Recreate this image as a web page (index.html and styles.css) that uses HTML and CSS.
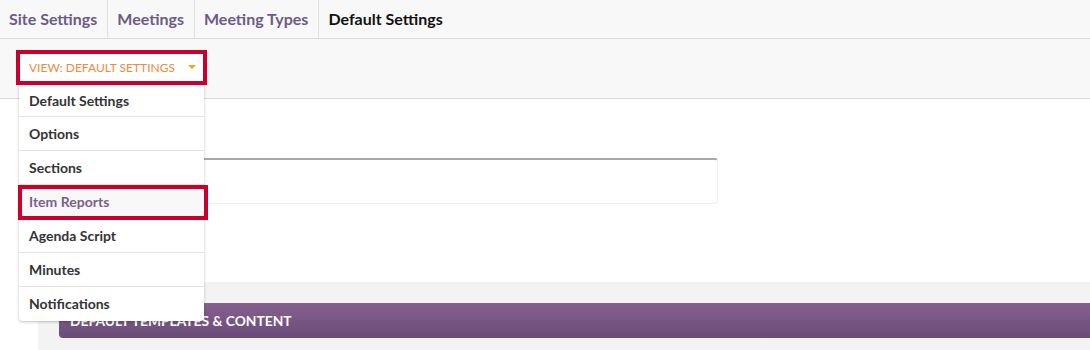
FILE: index.html
```html
<!DOCTYPE html>
<html lang="en">
<head>
<meta charset="utf-8">
<title>Default Settings</title>
<link rel="stylesheet" href="styles.css">
</head>
<body>
<nav class="tabs">
  <a class="tab">Site Settings</a>
  <a class="tab">Meetings</a>
  <a class="tab">Meeting Types</a>
  <a class="tab active">Default Settings</a>
</nav>
<div class="toolbar">
  <div class="view">
    <button class="view-btn"><span>VIEW: DEFAULT SETTINGS</span><span class="caret"></span></button>
    <ul class="menu">
      <li>Default Settings</li>
      <li>Options</li>
      <li>Sections</li>
      <li class="selected">Item Reports</li>
      <li>Agenda Script</li>
      <li>Minutes</li>
      <li>Notifications</li>
    </ul>
  </div>
</div>
<main class="content">
  <div class="field"></div>
</main>
<section class="panel">
  <div class="panel-bar">DEFAULT TEMPLATES &amp; CONTENT</div>
</section>
</body>
</html>
```
FILE: styles.css
```css
* { box-sizing: border-box; }
html, body { margin: 0; padding: 0; background: #fff; }
body {
  font-family: Lato, "Open Sans", "Liberation Sans", sans-serif;
  width: 1090px;
  height: 350px;
  overflow: hidden;
}
.tabs {
  display: flex;
  height: 39px;
  background: #f8f8f8;
  border-bottom: 1px solid #dcdcdc;
}
.tab {
  display: block;
  padding: 0 10px 0 9px;
  line-height: 38px;
  font-size: 16px;
  font-weight: 700;
  color: #6d5a86;
  border-right: 1px solid #e0e0e0;
}
.tab.active { color: #111; border-right: 0; }
.toolbar {
  height: 60px;
  background: #f8f8f8;
  border-bottom: 1px solid #d9d9d9;
  padding: 11px 0 0 16px;
}
.view { position: relative; width: 191px; }
.view-btn {
  position: relative;
  z-index: 6;
  display: flex;
  align-items: center;
  width: 191px;
  height: 35px;
  border: 4px solid #c9002b;
  background: #fff;
  padding: 0 0 1px 9px;
  margin: 0;
  font-family: inherit;
  font-size: 12px;
  color: #ef8a40;
  text-align: left;
}
.caret {
  display: inline-block;
  margin-left: 13px;
  width: 0;
  height: 0;
  border-left: 4px solid transparent;
  border-right: 4px solid transparent;
  border-top: 4px solid #f5a21c;
}
.menu {
  position: absolute;
  left: 3px;
  top: 33px;
  width: 185px;
  margin: 0;
  padding: 0;
  list-style: none;
  background: #fff;
  border-radius: 0 0 4px 4px;
  box-shadow: 0 1px 3px rgba(0,0,0,0.25);
  z-index: 5;
}
.menu li {
  position: relative;
  height: 34px;
  line-height: 33px;
  padding-left: 10px;
  font-size: 14px;
  font-weight: 700;
  color: #333;
  border-bottom: 1px solid #e3e3e3;
}
.menu li:first-child { line-height: 35px; }
.menu li:last-child { border-bottom: 0; }
.menu li.selected { background: #f8f8f8; color: #7a5f8c; }
.menu li.selected::after {
  content: "";
  position: absolute;
  top: 0;
  bottom: -2px;
  left: -1px;
  right: -4px;
  border: 4px solid #c9002b;
}
.content {
  height: 183px;
  padding: 59px 0 0 38px;
}
.field {
  width: 680px;
  height: 46px;
  border: 1px solid #efefef;
  border-top: 2px solid #a8a8a8;
  border-radius: 3px;
}
.panel {
  margin-left: 38px;
  height: 68px;
  background: #f3f3f3;
  padding: 21px 0 0 21px;
}
.panel-bar {
  height: 35px;
  line-height: 36px;
  padding-left: 11px;
  border-radius: 4px 0 0 4px;
  background: linear-gradient(#86608f, #6a4c78);
  color: #fff;
  font-size: 13.8px;
  font-weight: 700;
}
```
